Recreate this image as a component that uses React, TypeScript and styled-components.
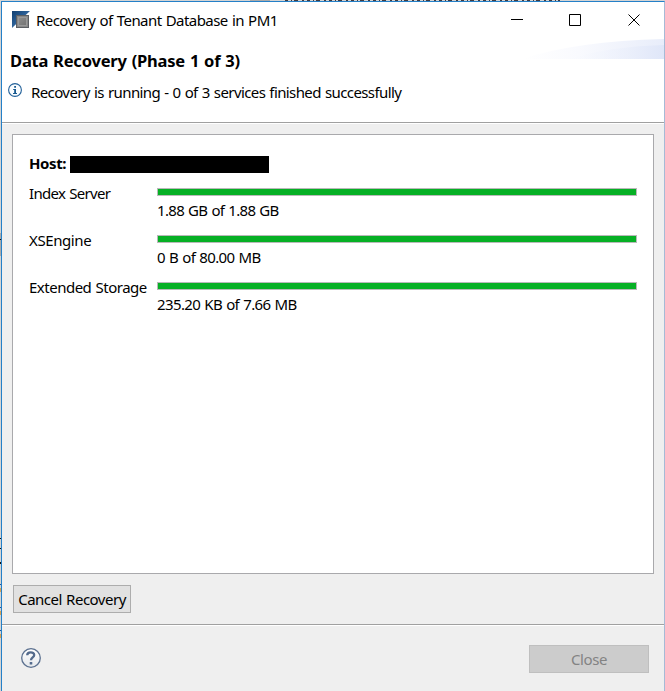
import React from "react";
import styled, { createGlobalStyle } from "styled-components";

const GlobalStyle = createGlobalStyle`
  * { box-sizing: border-box; }
  html, body { margin: 0; padding: 0; overflow: hidden; }
  body { font-family: "Noto Sans", "Open Sans", sans-serif; font-size: 15px; line-height: 20px; color: #000; }
`;

const Desktop = styled.div`
  position: relative;
  width: 665px;
  height: 691px;
  padding: 1px 0 0 1px;
  background: #d4d4d4;
  overflow: hidden;
`;

const BackdropArt = styled.svg`
  position: absolute;
  left: 0;
  top: 0;
`;

const Window = styled.main`
  position: relative;
  display: flex;
  flex-direction: column;
  width: 664px;
  height: 690px;
  border-top: 1px solid #2480c8;
  border-left: 1px solid #2480c8;
  border-right: 1px solid #a6bad6;
  background: #efefef;
`;

const Header = styled.header`
  position: relative;
  height: 122px;
  background: #fff;
  border-bottom: 1px solid #fff;
  &::after {
    content: "";
    display: block;
    height: 1px;
    background: #a0a0a0;
  }
`;

const TitleBar = styled.div`
  display: flex;
  height: 37px;
  padding: 9px 24px 0 10px;
`;

const TitleText = styled.div`
  flex: 1;
  margin-left: 5px;
  margin-top: -1px;
`;

const Controls = styled.div`
  display: flex;
  gap: 46px;
  padding-top: 3px;
  svg:last-child { margin-left: 1px; }
`;

const HeaderBody = styled.div`
  height: 83px;
  padding: 12px 0 0 8px;
`;

const Heading = styled.h1`
  margin: 0;
  font-size: 16.5px;
  font-weight: 700;
  line-height: 20px;
`;

const Message = styled.div`
  display: flex;
  gap: 8px;
  margin: 11px 0 0 -2px;
  svg { margin-top: 1px; }
`;

const Swoosh = styled.svg`
  position: absolute;
  right: 0;
  top: 37px;
`;

const Label = styled.span<{ $track?: number }>`
  display: block;
  white-space: nowrap;
  word-spacing: 0.8px;
  letter-spacing: ${(p) => p.$track ?? -0.4}px;
`;

const Content = styled.section`
  height: 501px;
  padding: 10px 10px 0;
`;

const Panel = styled.div`
  height: 440px;
  padding: 18px 16px 0;
  border: 1px solid #a9a9ac;
  background: #fff;
`;

const HostRow = styled.div`
  display: flex;
  height: 30px;
  font-weight: 700;
`;

const Redacted = styled.div`
  width: 199px;
  height: 17px;
  margin-top: 3px;
  background: #000;
`;

const HostLabel = styled.div`
  width: 41px;
`;

const ServiceRow = styled.div`
  display: grid;
  grid-template-columns: 128px 480px;
  height: 47px;
`;

const Bar = styled.div`
  height: 8px;
  margin: 5px 0 4px;
  border: 1px solid #b9b9b9;
  background: #06b025;
`;

const Button = styled.button<{ $width: number }>`
  display: flex;
  justify-content: center;
  width: ${(p) => p.$width}px;
  height: 28px;
  padding: 3px 0 0;
  border: 1px solid #adadad;
  background: #e1e1e1;
  color: #000;
  font: inherit;
  &:disabled {
    border-color: #bfbfbf;
    background: #ccc;
    color: #838383;
  }
`;

const CancelRow = styled.div`
  padding: 11px 0 0 1px;
`;

const Footer = styled.footer`
  display: flex;
  justify-content: space-between;
  flex: 1;
  padding: 19px 15px 0 18px;
  border-top: 1px solid #fff;
  box-shadow: 0 -1px 0 #a0a0a0;
`;

const HelpIconBox = styled.div`
  padding-top: 3px;
`;

const AppIcon = () => (
  <svg width="19" height="18" viewBox="0 0 19 18">
    <defs>
      <linearGradient id="blue" x1="0" y1="0" x2="1" y2="1">
        <stop offset="0" stopColor="#123f70" />
        <stop offset=".45" stopColor="#2b5f96" />
        <stop offset="1" stopColor="#9db2c8" />
      </linearGradient>
      <linearGradient id="steel" x1="0" y1="0" x2="1" y2="1">
        <stop offset="0" stopColor="#8e8e8e" />
        <stop offset="1" stopColor="#737373" />
      </linearGradient>
    </defs>
    <path d="M0 0H18L0 17Z" fill="url(#blue)" />
    <rect x="4.5" y="4.5" width="12" height="12" fill="#888" stroke="#5b5e63" />
    <rect x="6.5" y="6.5" width="8" height="8" fill="url(#steel)" stroke="#999" />
  </svg>
);

const InfoIcon = () => (
  <svg width="15" height="15" viewBox="0 0 15 15">
    <circle cx="7" cy="7" r="6.4" fill="#fafdff" stroke="#236199" strokeWidth="1.1" />
    <path d="M6.2 3h1.8v1.8H6.2zM5.2 6h2.8v4h1v1H5v-1h1.2V7h-1z" fill="#17598f" />
  </svg>
);

const HelpIcon = () => (
  <svg width="21" height="21" viewBox="0 0 21 21">
    <defs>
      <linearGradient id="help" x1="0" y1="0" x2="0" y2="1">
        <stop offset="0" stopColor="#fff" />
        <stop offset="1" stopColor="#e5e8ec" />
      </linearGradient>
    </defs>
    <circle cx="11" cy="10" r="9.3" fill="url(#help)" stroke="#5c7190" strokeWidth="1.3" />
    <path d="M7.2 7.2C7.3 3.4 14.2 3.3 14.2 7C14.2 9.5 11 9.4 11 12.3" fill="none" stroke="#536a8c" strokeWidth="2.3" />
    <rect x="9.7" y="14" width="2.6" height="2.5" rx=".6" fill="#536a8c" />
  </svg>
);

const controlPaths = ["M0 5.5H12", "M.5.5H11.5V11.5H.5Z", "M.5.5L11.5 11.5M11.5.5L.5 11.5"];

const services = [
  { name: "Index Server", size: "1.88 GB of 1.88 GB", nameTrack: -0.7, sizeTrack: -0.68 },
  { name: "XSEngine", size: "0 B of 80.00 MB", nameTrack: -0.4, sizeTrack: -0.63 },
  { name: "Extended Storage", size: "235.20 KB of 7.66 MB", nameTrack: -0.5, sizeTrack: -0.62 },
];

export default function App() {
  return (
    <Desktop>
      <GlobalStyle />
      <BackdropArt width="665" height="691">
        <path d="M250 0h20v1h-20z" fill="#aaa" />
        <path d="M285 .5H560" stroke="#413b40" strokeDasharray="3 3 1 2 4 4 2 3" />
        <path d="M0 233h1v23H0z" fill="#aaa" />
        <path d="M0 239h1v1H0zM0 538h1v1H0zM0 548h1v1H0zM0 562h1v2H0z" fill="#111" />
        <path d="M0 584h1v1H0zM0 607h1v1H0zM0 630h1v1H0z" fill="#1857a5" />
        <path d="M0 588h1v4H0zM0 611h1v4H0zM0 634h1v4H0z" fill="#d9a354" />
      </BackdropArt>
      <Window>
        <Header>
          <TitleBar>
            <AppIcon />
            <TitleText><Label $track={-0.55}>Recovery of Tenant Database in PM1</Label></TitleText>
            <Controls>
              {controlPaths.map((d) => (
                <svg key={d} width="12" height="12" viewBox="0 0 12 12">
                  <path d={d} fill="none" stroke="#000" />
                </svg>
              ))}
            </Controls>
          </TitleBar>
          <HeaderBody>
            <Heading><Label $track={-0.2}>Data Recovery (Phase 1 of 3)</Label></Heading>
            <Message>
              <InfoIcon />
              <Label $track={-0.6}>Recovery is running - 0 of 3 services finished successfully</Label>
            </Message>
          </HeaderBody>
          <Swoosh width="142" height="20" viewBox="0 0 142 20">
            <defs>
              <linearGradient id="sky">
                <stop offset="0" stopColor="#fff" />
                <stop offset=".4" stopColor="#f9fafe" />
                <stop offset="1" stopColor="#e8edfa" />
              </linearGradient>
              <linearGradient id="skyDeep">
                <stop offset="0" stopColor="#f8faff" stopOpacity="0" />
                <stop offset="1" stopColor="#dfe6f8" />
              </linearGradient>
            </defs>
            <path d="M0 20Q55 2 142 0V20Z" fill="url(#sky)" />
            <path d="M45 20Q90 7 142 6V20Z" fill="url(#skyDeep)" />
          </Swoosh>
        </Header>
        <Content>
          <Panel>
            <HostRow>
              <HostLabel><Label>Host:</Label></HostLabel>
              <Redacted />
            </HostRow>
            {services.map((s) => (
              <ServiceRow key={s.name}>
                <Label $track={s.nameTrack}>{s.name}</Label>
                <div>
                  <Bar />
                  <Label $track={s.sizeTrack}>{s.size}</Label>
                </div>
              </ServiceRow>
            ))}
          </Panel>
          <CancelRow>
            <Button $width={118}><Label $track={-0.5}>Cancel Recovery</Label></Button>
          </CancelRow>
        </Content>
        <Footer>
          <HelpIconBox><HelpIcon /></HelpIconBox>
          <Button $width={120} disabled><Label>Close</Label></Button>
        </Footer>
      </Window>
    </Desktop>
  );
}
